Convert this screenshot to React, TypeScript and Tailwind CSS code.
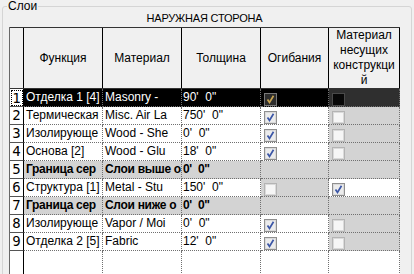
import React from "react";

type Box = "none" | "on" | "off";

type Row = {
  n: number;
  fn: string;
  mat: string;
  thick: string;
  wrap: Box;
  struct: Box;
  bold?: boolean;
  wrapGray?: boolean;
  structGray?: boolean;
};

// текст обрезан по целым символам, как в исходной таблице
const rows: Row[] = [
  { n: 1, fn: "Отделка 1 [4]", mat: "Masonry -", thick: "90'  0\"", wrap: "on", struct: "off", structGray: true },
  { n: 2, fn: "Термическая", mat: "Misc. Air La", thick: "750'  0\"", wrap: "on", struct: "off", structGray: true },
  { n: 3, fn: "Изолирующе", mat: "Wood - She", thick: "0'  0\"", wrap: "on", struct: "off", structGray: true },
  { n: 4, fn: "Основа [2]", mat: "Wood - Glu", thick: "18'  0\"", wrap: "on", struct: "off", structGray: true },
  { n: 5, fn: "Граница сер", mat: "Слои выше о", thick: "0'  0\"", wrap: "none", struct: "none", bold: true },
  { n: 6, fn: "Структура [1]", mat: "Metal - Stu", thick: "150'  0\"", wrap: "off", struct: "on", wrapGray: true },
  { n: 7, fn: "Граница сер", mat: "Слои ниже о", thick: "0'  0\"", wrap: "none", struct: "none", bold: true },
  { n: 8, fn: "Изолирующе", mat: "Vapor / Moi", thick: "0'  0\"", wrap: "on", struct: "off", structGray: true },
  { n: 9, fn: "Отделка 2 [5]", mat: "Fabric", thick: "12'  0\"", wrap: "on", struct: "off", structGray: true },
];

function Check({ state, dark }: { state: Box; dark?: "row" | "cell" }) {
  if (state === "none") return null;
  let border = "#8f8f8f";
  let fill = "#ececec";
  let mark = "#3b56a6";
  if (state === "off") {
    border = "#b4b4b4";
    fill = "#f6f6f6";
  }
  if (dark === "row") {
    border = "#7a7a7a";
    fill = "#2c2c2c";
    mark = "#c9a552";
  }
  if (dark === "cell") {
    border = "#4a4a4a";
    fill = "#080808";
  }
  return (
    <svg width="13" height="13" viewBox="0 0 13 13" className="mt-[4px] ml-[3px] block">
      <rect x="0.5" y="0.5" width="12" height="12" fill={fill} stroke={border} />
      <rect x="1.5" y="1.5" width="10" height="10" fill="none" stroke={dark ? "transparent" : "#dadada"} />
      {state === "on" && (
        <path d="M3.5 6.5 L5.5 9.5 L9.5 2.8" fill="none" stroke={mark} strokeWidth="1.7" />
      )}
    </svg>
  );
}

const dot = "border-r border-b border-dotted border-[#707070]";

export default function App() {
  return (
    <div className="w-[414px] h-[274px] overflow-hidden bg-[#f0f0f0] text-black font-['Liberation_Sans',Arial,sans-serif]">
      <fieldset className="m-0 mx-[2px] h-[300px] min-w-0 rounded-[3px] border border-[#d5d5d5] pl-[6px] pr-[9px] pt-0">
        <legend className="-ml-[2px] px-[1px] text-[12px] leading-[12px]">Слои</legend>
        <div className="h-[15px] w-[391px] text-center text-[11px] leading-[12px] tracking-[-0.2px]">НАРУЖНАЯ СТОРОНА</div>

        <div className="w-[391px] border-l border-[#696969] bg-white">
          <div className="flex h-[62px] border-t border-b border-[#333] bg-[#f0f0f0] text-[12px] leading-[15px]">
            <div className="w-[14px] border-r border-black" />
            <div className="w-[79px] border-r border-black flex items-center justify-center">Функция</div>
            <div className="w-[79px] border-r border-black flex items-center justify-center">Материал</div>
            <div className="w-[79px] border-r border-black flex items-center justify-center">Толщина</div>
            <div className="w-[68px] border-r border-black flex items-center justify-center">Огибания</div>
            <div className="w-[71px] border-r border-black flex flex-col items-center justify-center text-center">
              <span>Материал</span>
              <span>несущих</span>
              <span>конструкци</span>
              <span>й</span>
            </div>
          </div>

          {rows.map((r) => {
            const sel = r.n === 1;
            const base = sel ? "bg-black text-white" : r.bold ? "bg-[#d3d3d3]" : "bg-white";
            const wrapBg = sel ? "bg-black" : r.bold || r.wrapGray ? "bg-[#d3d3d3]" : "bg-white";
            const structBg = sel ? "bg-[#2f2f2f]" : r.bold || r.structGray ? "bg-[#d3d3d3]" : "bg-white";
            const txt = `overflow-hidden whitespace-pre text-[12px] leading-[17px] ${
              r.bold ? "font-bold tracking-[-0.3px]" : ""
            }`;
            return (
              <div key={r.n} className="flex h-[18px]">
                <div className="w-[14px] border-r border-b border-r-black border-b-[#555] bg-white flex items-center justify-center">
                  <span
                    className={`font-['DejaVu_Sans_Mono',monospace] text-[14px] leading-[15px] h-[16px] w-[12px] text-center ${
                      sel ? "border border-dotted border-black" : ""
                    }`}
                  >
                    {r.n}
                  </span>
                </div>
                <div className={`w-[79px] pl-[2px] ${dot} ${base} ${txt}`}>{r.fn}</div>
                <div className={`w-[79px] pl-[2px] ${dot} ${base} ${txt}`}>{r.mat}</div>
                <div className={`w-[79px] pl-[1px] ${dot} ${base} ${txt}`}>{r.thick}</div>
                <div className={`w-[68px] ${dot} ${wrapBg}`}>
                  <Check state={r.wrap} dark={sel ? "row" : undefined} />
                </div>
                <div className={`w-[71px] ${dot} ${structBg}`}>
                  <Check state={r.struct} dark={sel ? "cell" : undefined} />
                </div>
              </div>
            );
          })}

          <div className="flex h-[40px]">
            <div className="w-[14px] border-r border-black bg-white" />
            <div className="w-[79px] border-r border-dotted border-[#707070]" />
            <div className="w-[79px] border-r border-dotted border-[#707070]" />
            <div className="w-[79px] border-r border-dotted border-[#707070]" />
            <div className="w-[68px] border-r border-dotted border-[#707070]" />
            <div className="w-[71px] border-r border-dotted border-[#707070]" />
          </div>
        </div>
      </fieldset>
    </div>
  );
}
